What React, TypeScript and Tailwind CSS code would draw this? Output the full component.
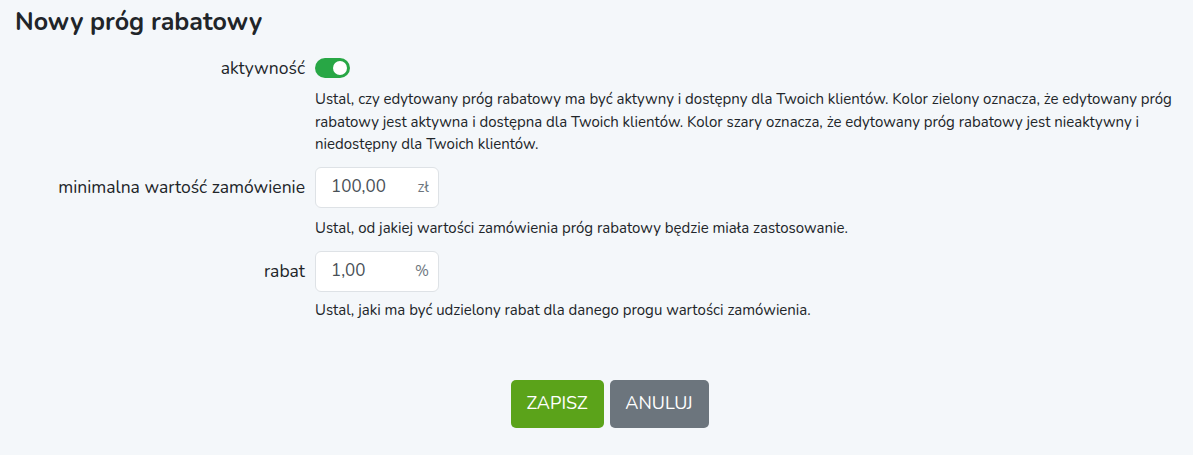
import React from "react";

const font = { fontFamily: '"Nunito", "Noto Sans", "Open Sans", sans-serif' };

function Field({ value, unit }: { value: string; unit: string }) {
  return (
    <div className="flex h-[41px] w-[124px] items-center justify-between rounded-[6px] border border-[#dee2e6] bg-white pl-[15px] pr-[9px]">
      <span className="text-[17px] text-[#495057]">{value}</span>
      <span className="text-[15px] text-[#6c757d]">{unit}</span>
    </div>
  );
}

export default function App() {
  return (
    <div className="min-h-[455px] w-full bg-[#f4f7fa] text-[#212529]" style={font}>
      <h1 className="px-[15px] pt-[6px] text-[25px] font-bold leading-[32px] text-[#212529]">
        Nowy próg rabatowy
      </h1>
      <div className="mt-[20px] grid grid-cols-[305px_1fr] gap-x-[10px]">
        <div className="flex h-[20px] items-center justify-end text-[17.5px]">aktywność</div>
        <div>
          <div className="relative h-[20px] w-[35px] rounded-full bg-[#28a745]">
            <div className="absolute right-[3px] top-[3px] h-[14px] w-[14px] rounded-full bg-white" />
          </div>
          <p className="mt-[10px] pr-[15px] text-[15px] leading-[22.5px]">
            Ustal, czy edytowany próg rabatowy ma być aktywny i dostępny dla Twoich klientów. Kolor zielony oznacza, że edytowany próg rabatowy jest aktywna i dostępna dla Twoich klientów. Kolor szary oznacza, że edytowany próg rabatowy jest nieaktywny i niedostępny dla Twoich klientów.
          </p>
        </div>

        <div className="mt-[11px] flex h-[41px] items-center justify-end text-[17.5px]">minimalna wartość zamówienie</div>
        <div className="mt-[11px]">
          <Field value="100,00" unit="zł" />
          <p className="mt-[9px] text-[15px] leading-[22px]">
            Ustal, od jakiej wartości zamówienia próg rabatowy będzie miała zastosowanie.
          </p>
        </div>

        <div className="mt-[12px] flex h-[41px] items-center justify-end text-[17.5px]">rabat</div>
        <div className="mt-[12px]">
          <Field value="1,00" unit="%" />
          <p className="mt-[7px] text-[15px] leading-[22px]">
            Ustal, jaki ma być udzielony rabat dla danego progu wartości zamówienia.
          </p>
        </div>
      </div>
      <div className="mt-[59px] flex justify-center gap-[6px] pl-[26px]">
        <button className="h-[48px] w-[93px] rounded-[5px] bg-[#5ba31a] text-[18px] text-white">ZAPISZ</button>
        <button className="h-[48px] w-[99px] rounded-[5px] bg-[#6c757d] text-[18px] text-white">ANULUJ</button>
      </div>
    </div>
  );
}
